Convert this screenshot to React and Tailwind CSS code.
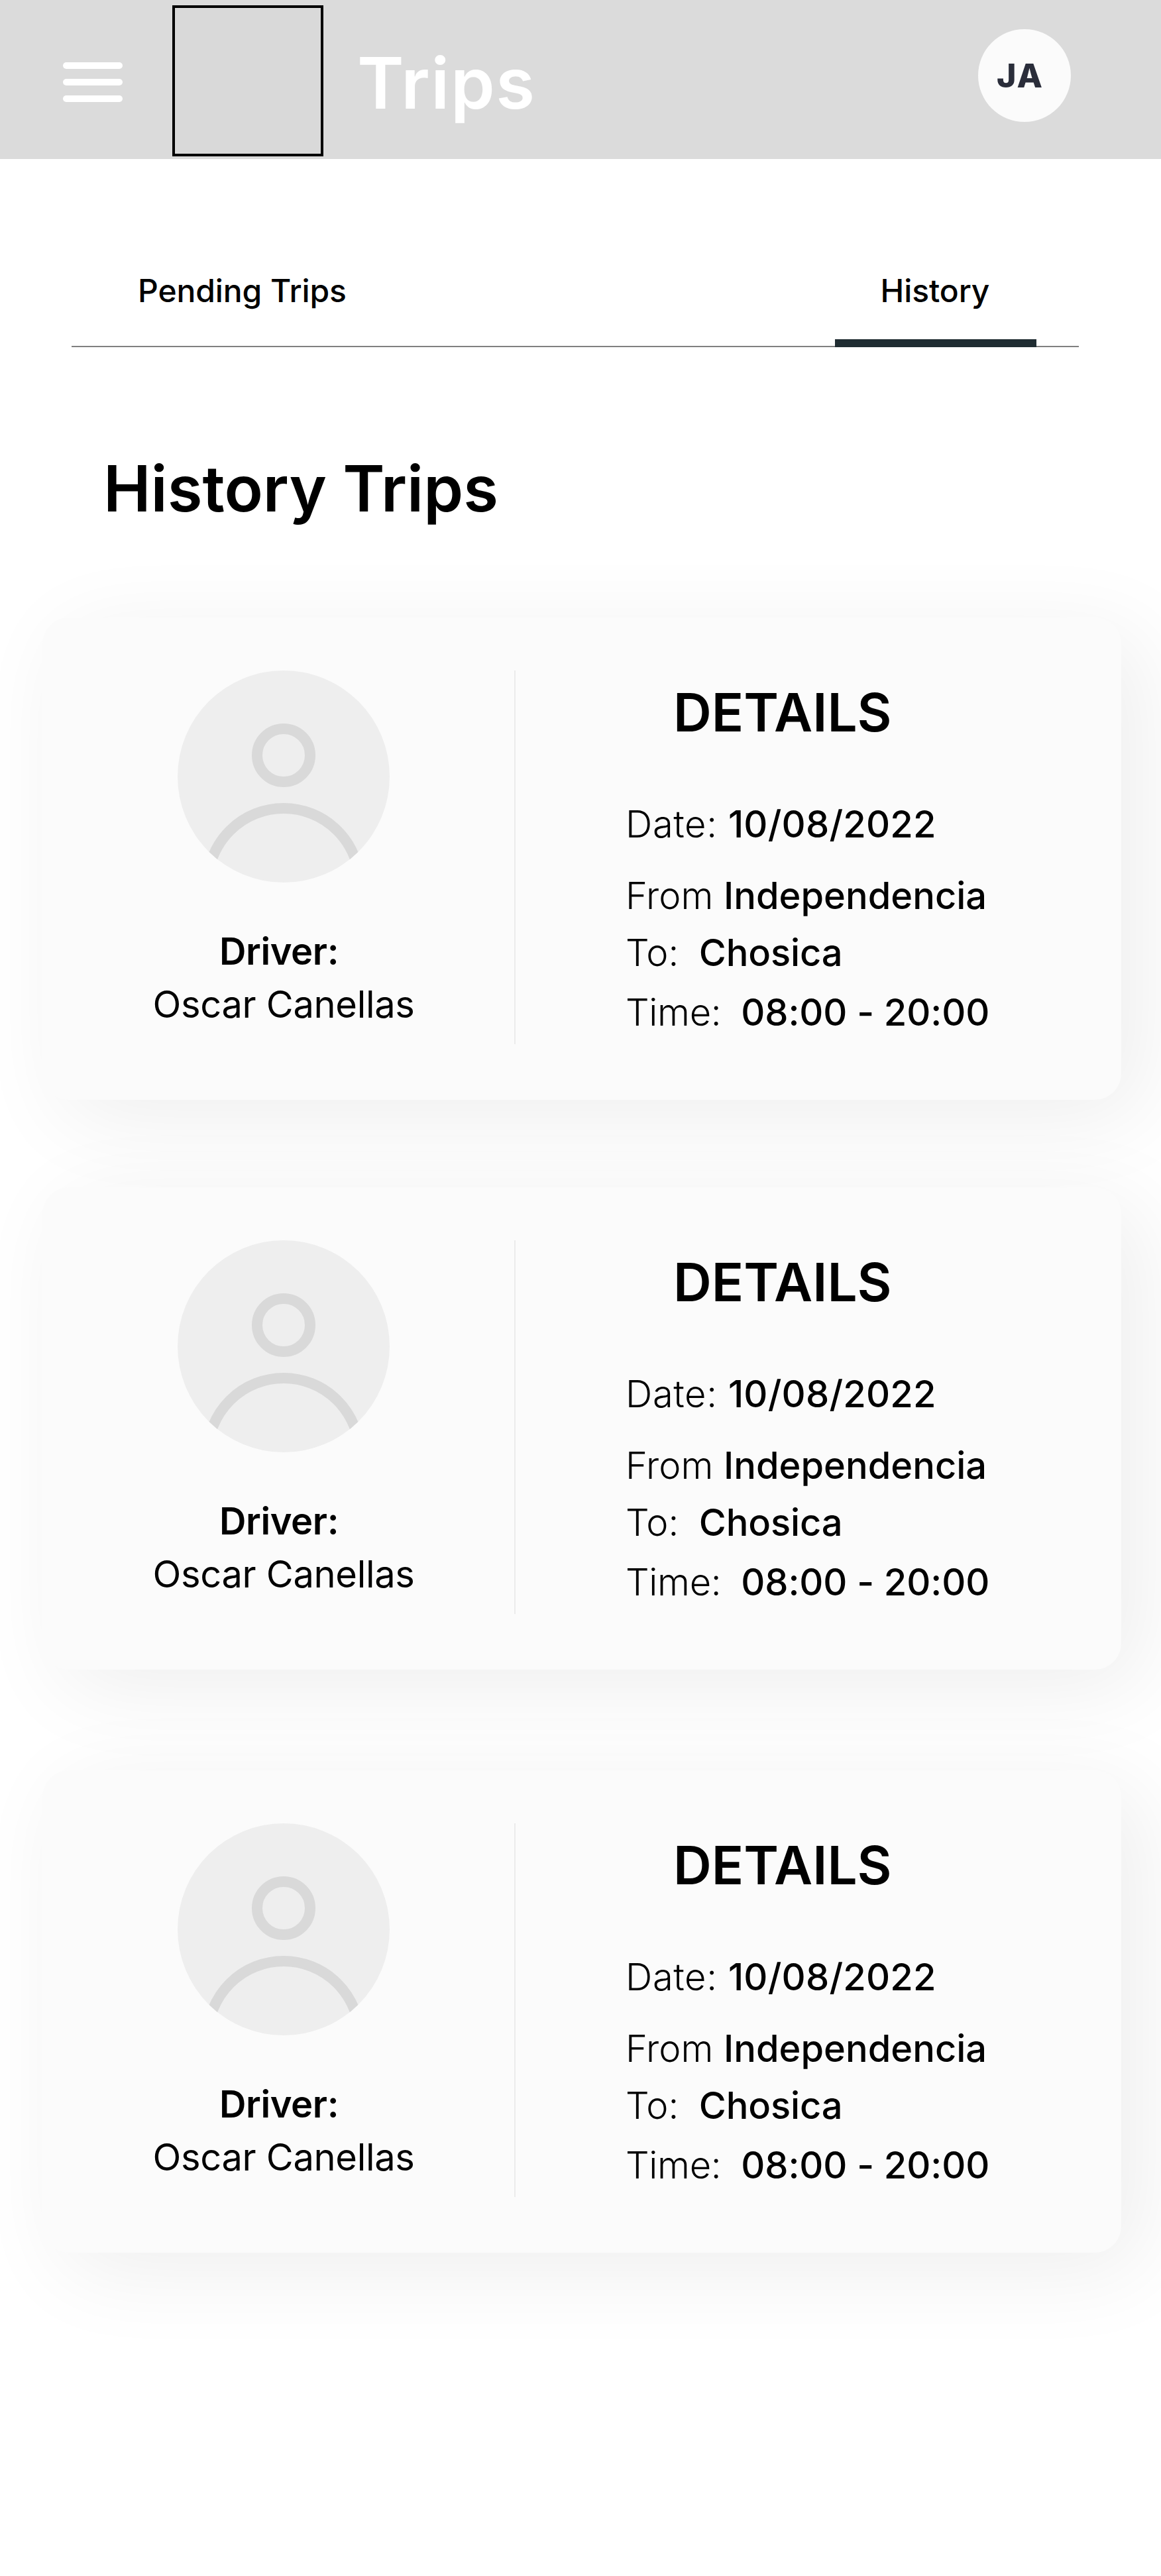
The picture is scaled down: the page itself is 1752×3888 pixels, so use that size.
const trips = [
  { driver: 'Oscar Canellas', date: '10/08/2022', from: 'Independencia', to: 'Chosica', time: '08:00 - 20:00', gap: 'mt-0' },
  { driver: 'Oscar Canellas', date: '10/08/2022', from: 'Independencia', to: 'Chosica', time: '08:00 - 20:00', gap: 'mt-[132px]' },
  { driver: 'Oscar Canellas', date: '10/08/2022', from: 'Independencia', to: 'Chosica', time: '08:00 - 20:00', gap: 'mt-[152px]' },
];

function Header() {
  return (
    <header className="flex h-[240px] items-start bg-[#dbdbdb]">
      <button className="mt-[94px] ml-[95px] flex w-[90px] flex-col gap-[15px]" aria-label="Menu">
        <span className="h-[10px] w-full rounded-[5px] bg-white" />
        <span className="h-[10px] w-full rounded-[5px] bg-white" />
        <span className="h-[10px] w-full rounded-[5px] bg-white" />
      </button>
      <div className="mt-[8px] ml-[75px] h-[228px] w-[228px] border-4 border-black bg-[#d9d9d9]" />
      <h1 className="mt-[61px] ml-[51px] text-[107px] leading-[128px] font-semibold tracking-[1.6px] whitespace-nowrap text-white">Trips</h1>
      <div className="mt-[44px] mr-[136px] ml-auto flex h-[140px] w-[140px] items-center rounded-full bg-[#fbfbfb] pl-[28px] text-[50px] font-extrabold tracking-[2px] text-[#2a2d3a]">
        JA
      </div>
    </header>
  );
}

function Tabs() {
  return (
    <nav className="mt-[168px] mr-[124px] ml-[108px] flex h-[116px] justify-between border-b-2 border-[#808080] pr-[64px] text-[48px] leading-[62px] font-medium tracking-[-0.1px]">
      <button className="ml-[100px] h-[62px]">Pending Trips</button>
      <button className="-mb-[2px] h-[116px] w-[304px] border-b-[12px] border-[#202d32] pr-[2px] pb-[42px]">History</button>
    </nav>
  );
}

function Avatar() {
  return (
    <svg className="h-[320px] w-[320px]" viewBox="0 0 320 320" fill="none">
      <defs>
        <clipPath id="avatar">
          <circle cx="160" cy="160" r="160" />
        </clipPath>
      </defs>
      <circle cx="160" cy="160" r="160" fill="#eeeeee" />
      <g clipPath="url(#avatar)" stroke="#d9d9d9" strokeWidth="16">
        <circle cx="160" cy="128" r="40" />
        <circle cx="160" cy="322.6" r="114.6" />
      </g>
    </svg>
  );
}

function Row({ label, value, labelSpace = '', space = '', className }) {
  return (
    <p className={className}>
      <span className={`font-light ${labelSpace}`}>{label}</span>
      <span className={space}>{value}</span>
    </p>
  );
}

function TripCard({ trip }) {
  return (
    <article className={`${trip.gap} ml-[64px] flex h-[728px] w-[1628px] rounded-[40px] bg-[#fbfbfb] pt-[80px] shadow-[32px_26px_136px_rgba(0,0,0,0.07)]`}>
      <section className="flex h-[564px] w-[714px] flex-col items-center border-r-2 border-[#ebebeb] pl-[16px]">
        <Avatar />
        <p className="mt-[70px] w-full pl-[251px] text-[56px] leading-[68px] font-semibold tracking-[-0.4px]">Driver:</p>
        <p className="mt-[12px] text-[56px] leading-[68px] tracking-[-0.3px]">{trip.driver}</p>
      </section>
      <section className="pl-[166px] text-[56px] leading-[68px] font-medium whitespace-pre">
        <h3 className="mt-[14px] ml-[72px] text-[80px] leading-[98px] font-semibold">DETAILS</h3>
        <Row className="mt-[86px]" label="Date: " value={trip.date} labelSpace="tracking-[0.6px]" space="tracking-[0.2px]" />
        <Row className="mt-[40px]" label="From " value={trip.from} />
        <Row className="mt-[18px]" label="To:  " value={trip.to} space="-ml-[1px] tracking-[-0.1px]" />
        <Row className="mt-[22px]" label="Time:  " value={trip.time} labelSpace="tracking-[-0.3px]" space="-ml-[1px] tracking-[-0.1px]" />
      </section>
    </article>
  );
}

export default function App() {
  return (
    <div className="h-[3888px] w-[1752px] overflow-hidden bg-white font-['Inter',sans-serif] text-black">
      <Header />
      <Tabs />
      <h2 className="mt-[155px] ml-[156px] text-[96px] leading-[116px] font-semibold">History Trips</h2>
      <main className="mt-[137px]">
        {trips.map((trip, i) => (
          <TripCard key={i} trip={trip} />
        ))}
      </main>
    </div>
  );
}
